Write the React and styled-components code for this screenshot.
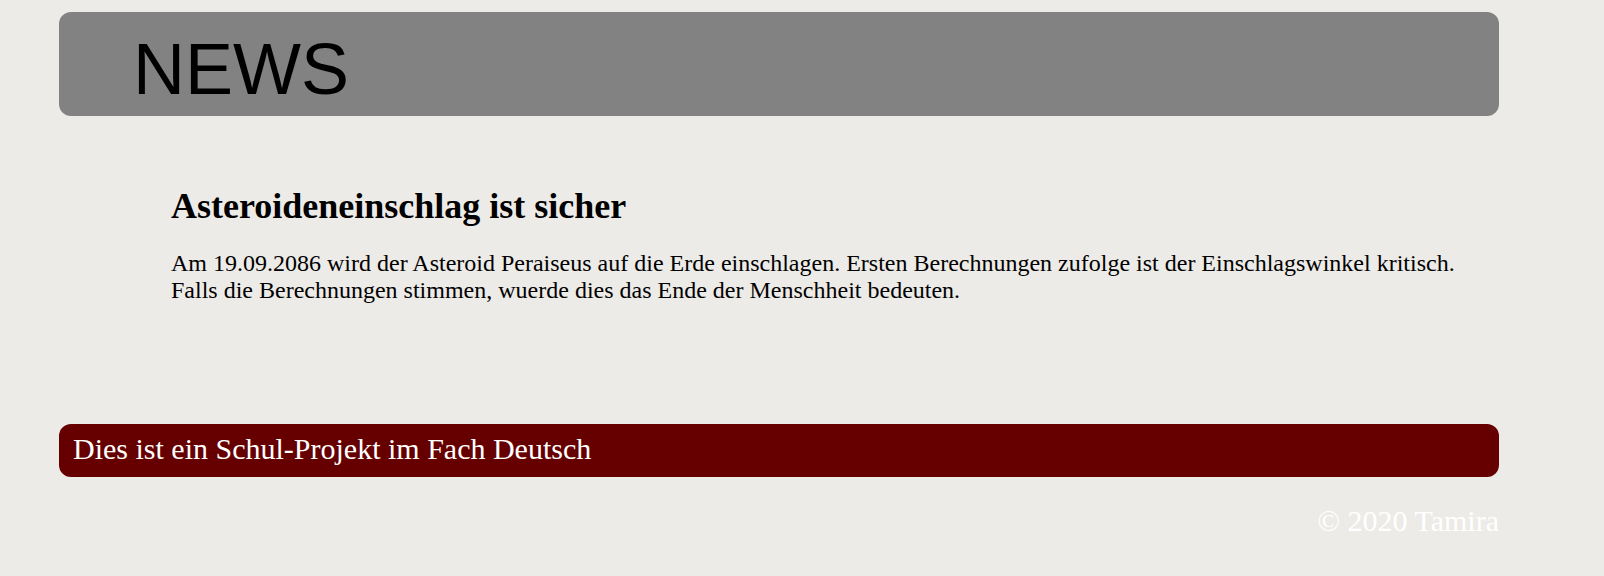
import React from 'react';
import styled, { createGlobalStyle } from 'styled-components';

const GlobalStyle = createGlobalStyle`
  html, body {
    margin: 0;
    padding: 0;
    background-color: #edebe7;
  }
  body {
    font-family: "Liberation Serif", "Times New Roman", serif;
  }
`;

const Page = styled.div`
  width: 1440px;
  margin-left: 59px;
  padding-top: 12px;
`;

const Banner = styled.header`
  box-sizing: border-box;
  height: 104px;
  padding: 16px 0 0 74px;
  background-color: #828282;
  border-radius: 12px;
`;

const BannerTitle = styled.h1`
  margin: 0;
  font-family: "Liberation Sans", Arial, sans-serif;
  font-size: 72px;
  font-weight: normal;
  line-height: normal;
  color: #000;
`;

const Article = styled.article`
  padding: 69px 40px 0 112px;
`;

const Headline = styled.h2`
  margin: 0 0 23px;
  font-size: 36px;
  font-weight: bold;
  line-height: normal;
  color: #000;
`;

const Text = styled.p`
  margin: 0;
  font-size: 24px;
  line-height: normal;
  color: #000;
`;

const Note = styled.div`
  box-sizing: border-box;
  height: 53px;
  margin-top: 120px;
  padding: 8px 14px 0;
  background-color: #660000;
  border-radius: 12px;
  color: #fff;
  font-size: 30px;
  line-height: normal;
`;

const Copyright = styled.footer`
  margin-top: 27px;
  text-align: right;
  color: #fff;
  font-size: 30px;
  line-height: normal;
`;

export default function App() {
  return (
    <>
      <GlobalStyle />
      <Page>
        <Banner>
          <BannerTitle>NEWS</BannerTitle>
        </Banner>
        <Article>
          <Headline>Asteroideneinschlag ist sicher</Headline>
          <Text>
            Am 19.09.2086 wird der Asteroid Peraiseus auf die Erde einschlagen. Ersten Berechnungen zufolge ist der Einschlagswinkel kritisch.
            <br />
            Falls die Berechnungen stimmen, wuerde dies das Ende der Menschheit bedeuten.
          </Text>
        </Article>
        <Note>Dies ist ein Schul-Projekt im Fach Deutsch</Note>
        <Copyright>© 2020 Tamira</Copyright>
      </Page>
    </>
  );
}
